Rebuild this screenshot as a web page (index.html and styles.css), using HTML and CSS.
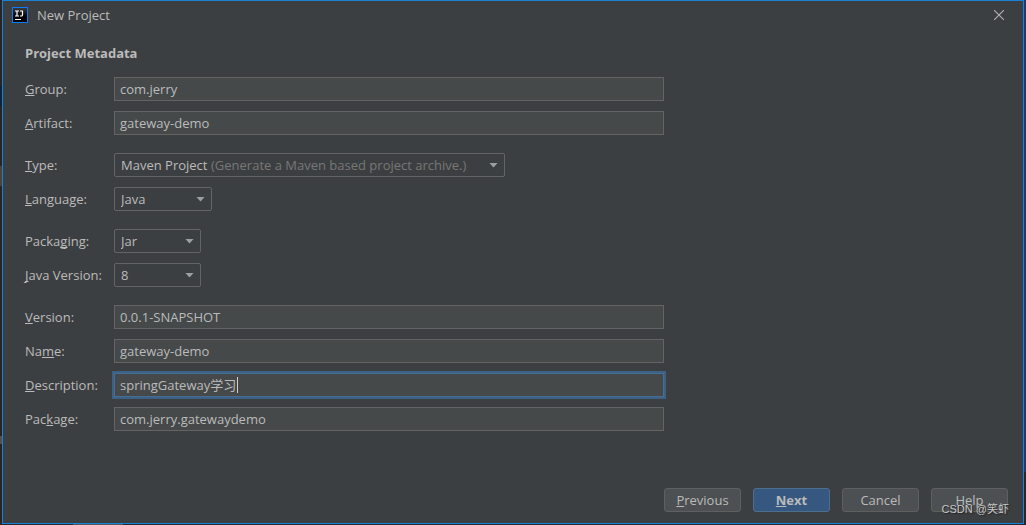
FILE: index.html
```html
<!DOCTYPE html>
<html lang="en">
<head>
<meta charset="utf-8">
<meta name="viewport" content="width=device-width, initial-scale=1">
<title>New Project</title>
<link rel="stylesheet" href="styles.css">
</head>
<body>
<div class="desktop">
  <main class="dialog">
    <header class="titlebar">
      <svg class="app-icon" width="16" height="16" viewBox="0 0 16 16" aria-hidden="true">
        <defs><linearGradient id="shade" x2="0" y2="1"><stop offset="0" stop-color="#3a3a3a"/><stop offset="0.600" stop-color="#000"/></linearGradient></defs>
        <rect width="16" height="16" fill="#087cfa"/>
        <rect x="1" y="1" width="14" height="14" fill="url(#shade)"/>
        <path d="M3 4h4M5 4v5M3 9h4M8 4h3M10.500 3.500v4.500q0 1-1 1h-1.500" fill="none" stroke="#fff" stroke-width="1.200"/>
        <rect x="3" y="12" width="6" height="1" fill="#fff"/>
      </svg>
      <h1 class="title">New Project</h1>
      <button class="close" type="button" aria-label="Close">
        <svg width="10" height="10" viewBox="0 0 10 10"><path d="M0 0L10 10M10 0L0 10" stroke="#b0b2b3" stroke-width="1.100"/></svg>
      </button>
    </header>
    <form class="form">
      <h2 class="heading">Project Metadata</h2>
      <div class="group">
        <div class="row"><label for="group"><u>G</u>roup:</label><input class="text" id="group" value="com.jerry"></div>
        <div class="row"><label for="artifact"><u>A</u>rtifact:</label><input class="text" id="artifact" value="gateway-demo"></div>
      </div>
      <div class="group">
        <div class="row"><label for="type"><u>T</u>ype:</label>
          <div class="combo combo-wide"><select id="type"><option>Maven Project</option></select><span class="hint">(Generate a Maven based project archive.)</span><i class="arrow"></i></div>
        </div>
        <div class="row"><label for="language"><u>L</u>anguage:</label>
          <div class="combo combo-medium"><select id="language"><option>Java</option></select><i class="arrow"></i></div>
        </div>
      </div>
      <div class="group">
        <div class="row"><label for="packaging">Packa<u>g</u>ing:</label>
          <div class="combo combo-small"><select id="packaging"><option>Jar</option></select><i class="arrow"></i></div>
        </div>
        <div class="row"><label for="java"><u>J</u>ava Version:</label>
          <div class="combo combo-small"><select id="java"><option>8</option></select><i class="arrow"></i></div>
        </div>
      </div>
      <div class="group">
        <div class="row"><label for="version"><u>V</u>ersion:</label><input class="text" id="version" value="0.0.1-SNAPSHOT"></div>
        <div class="row"><label for="name">Na<u>m</u>e:</label><input class="text" id="name" value="gateway-demo"></div>
        <div class="row"><label for="description"><u>D</u>escription:</label>
          <div class="active-field"><input class="text text-active" id="description" value="springGateway学习"><i class="caret"></i></div>
        </div>
        <div class="row"><label for="package">Pac<u>k</u>age:</label><input class="text" id="package" value="com.jerry.gatewaydemo"></div>
      </div>
    </form>
    <footer class="actions">
      <button class="button" type="button"><span><u>P</u>revious</span></button>
      <button class="button button-primary" type="button"><span><u>N</u>ext</span></button>
      <button class="button" type="button">Cancel</button>
      <button class="button" type="button">Help</button>
    </footer>
  </main>
  <span class="watermark">CSDN @笑虾</span>
</div>
</body>
</html>
```
FILE: styles.css
```css
* { box-sizing: border-box; }

body {
  margin: 0;
  background: #242628;
  color: #bbbbbb;
  font: 13px/20px "Open Sans", "Noto Sans CJK SC", sans-serif;
}

.desktop {
  position: relative;
  display: flex;
  min-height: 100vh;
  padding: 0 2px 1px;
  background:
    linear-gradient(#55595c, #55595c) 73px 100% / 50px 1px no-repeat,
    linear-gradient(#0b2440, #0b2440) 0 86px / 2px 20px no-repeat,
    linear-gradient(#45443d, #45443d) 0 166px / 2px 20px no-repeat,
    linear-gradient(#4e5052, #4e5052) 0 436px / 2px 8px no-repeat,
    linear-gradient(#21356f, #21356f) 100% 0 / 2px 472px no-repeat,
    #242628;
}

.dialog {
  flex: 1;
  display: flex;
  flex-direction: column;
  border: 1px solid #1880d5;
  background: #3c3f41;
}

.titlebar {
  display: flex;
  align-items: center;
  gap: 9px;
  height: 28px;
  padding: 0 19px 0 9px;
}

.title {
  flex: 1;
  margin: 0;
  font-size: 13px;
  font-weight: 400;
}

.close {
  display: flex;
  padding: 0;
  border: 0;
  background: none;
}

.form {
  display: flex;
  flex-direction: column;
  gap: 18px;
  flex: 1;
  padding: 14px 22px;
}

.heading {
  margin: 0 0 -4px;
  font-size: 13px;
  font-weight: 700;
}

.group {
  display: flex;
  flex-direction: column;
  gap: 10px;
}

.row {
  display: grid;
  grid-template-columns: 89px minmax(0, 550px);
  align-items: center;
  min-height: 24px;
}

label { padding-bottom: 1px; }

u {
  text-decoration: underline;
  text-decoration-skip-ink: none;
  text-underline-offset: 1px;
}

.text,
select {
  width: 100%;
  height: 24px;
  margin: 0;
  border: 1px solid #646464;
  color: #bbbbbb;
  font: inherit;
  outline: 0;
}

.text {
  padding: 0 5px 1px;
  background: #45494a;
}

.active-field,
.combo {
  display: grid;
  align-items: center;
}

.active-field > *,
.combo > * { grid-area: 1 / 1; }

.text-active {
  border-color: #466d94;
  box-shadow: 0 0 0 2px #3d6185;
}

.caret {
  width: 1px;
  height: 16px;
  margin-left: 123px;
  background: #d0d0d0;
}

select {
  appearance: none;
  padding: 0 6px 1px;
  border-radius: 2px;
  background: #3c3f41;
}

.combo-wide { max-width: 391px; }
.combo-medium { width: 98px; }
.combo-small { width: 87px; }

.hint {
  padding-bottom: 1px;
  margin-left: 97px;
  overflow: hidden;
  color: #777777;
  white-space: nowrap;
  pointer-events: none;
}

.arrow {
  justify-self: end;
  width: 9px;
  height: 5px;
  margin-right: 7px;
  background: #9da0a2;
  clip-path: polygon(0 0, 100% 0, 50% 100%);
  pointer-events: none;
}

.actions {
  display: flex;
  justify-content: flex-end;
  gap: 12px;
  padding: 0 15px 11px;
}

.button {
  width: 77px;
  height: 24px;
  padding: 0;
  border: 1px solid #5e6060;
  border-radius: 3px;
  background: #4c5052;
  color: #bbbbbb;
  font: inherit;
}

.button-primary {
  border-color: #4c708c;
  background: #365880;
  font-weight: 700;
}

.watermark {
  position: absolute;
  right: 17px;
  bottom: 6px;
  color: #c8c8c8;
  font: 11px/20px "Liberation Sans", "Noto Sans CJK SC", sans-serif;
  text-shadow: 1px 1px 1px #222222;
  pointer-events: none;
}
```
